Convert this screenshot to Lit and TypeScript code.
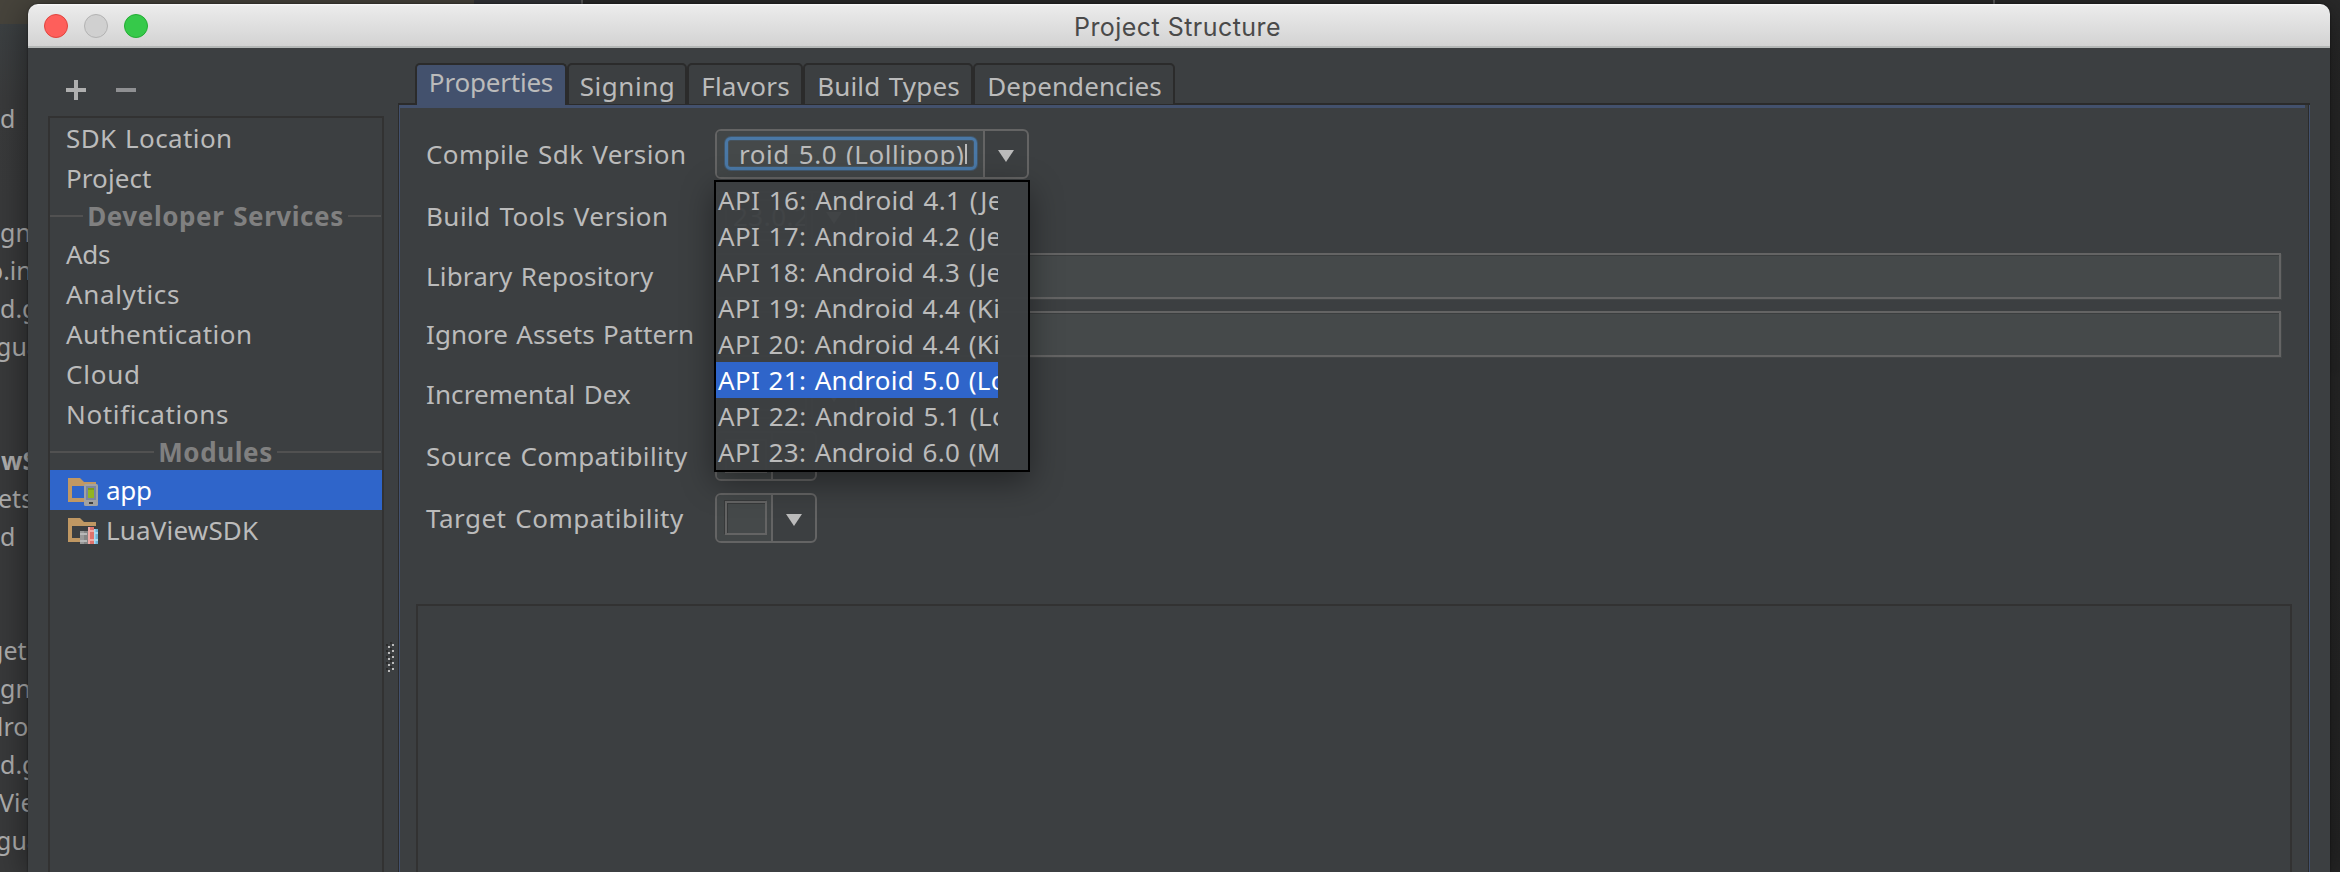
import { LitElement, html, css, svg, nothing } from "lit";
import { customElement, property } from "lit/decorators.js";
import { styleMap } from "lit/directives/style-map.js";

const UI_FONT = '"Noto Sans", sans-serif';
const TITLE_FONT = 'Inter, sans-serif';
const WORD_GAP = 1.5;

const pen = document.createElement("canvas").getContext("2d")!;

/** Letter spacing that makes `text` span `width` pixels from first to last stroke. */
function tracking(text: string, width: number, font: string, wordGap: number): string {
  pen.font = font;
  const m = pen.measureText(text);
  const natural = m.actualBoundingBoxLeft + m.actualBoundingBoxRight;
  const spaces = text.split(" ").length - 1;
  return `${((width - natural - spaces * wordGap) / (text.length - 1)).toFixed(3)}px`;
}

@customElement("ui-text")
class UiText extends LitElement {
  static styles = css`
    :host { display: inline-block; white-space: pre; }
    .run { word-spacing: 1.5px; font-kerning: normal; }
    .title { word-spacing: 0; }
  `;
  @property() text = "";
  @property() tail = "";
  @property() kind: "plain" | "bold" | "title" = "plain";
  @property({ type: Number }) span = 0;

  render() {
    const title = this.kind === "title";
    const font = title ? `25px ${TITLE_FONT}` : `${this.kind === "bold" ? "bold " : ""}26px ${UI_FONT}`;
    const spacing = tracking(this.text, this.span, font, title ? 0 : WORD_GAP);
    return html`<span class="run ${this.kind}" style=${styleMap({ letterSpacing: spacing })}>${this.text}${this.tail}</span>`;
  }
}

const t = (text: string, span: number, kind = "plain", tail = "") =>
  html`<ui-text .text=${text} .span=${span} .kind=${kind} .tail=${tail}></ui-text>`;

@customElement("ui-combo")
class UiCombo extends LitElement {
  static styles = css`
    :host { display: flex; box-sizing: border-box; height: 50px; border: 2px solid #646464; border-radius: 6px;
      background: #3c3f41; position: relative; }
    .editor { flex: 1; display: flex; background: #424647; border-right: 2px solid #646464; border-radius: 4px 0 0 4px; min-width: 0; }
    .box { flex: 1; box-sizing: border-box; height: 34px; margin: 6px 4px 0 8px; border: 2px solid #646464; background: #45494a;
      box-shadow: -1px -1px 0 #37393a, inset 1px 1px 0 #37393a; overflow: hidden; line-height: 30px; padding-left: 6px; }
    .focused { height: 33px; margin-right: 6px; border: 3px solid #4a78a6; border-radius: 6px; padding: 2px 0 0 11px;
      box-shadow: 0 0 0 1px #41586d, inset 0 0 0 1px #46535d; line-height: 24px; }
    .clip { display: flex; height: 23px; overflow: hidden; }
    .caret { width: 1.5px; height: 20px; margin: 2px 0 0 1px; background: #bbb; }
    .arrow { width: 42px; display: flex; align-items: center; justify-content: center; }
    .arrow svg { display: block; margin-top: 4px; }
  `;
  @property({ type: Boolean }) focused = false;
  @property() value = "";
  @property({ type: Number }) span = 0;

  render() {
    const value = this.value ? t(this.value, this.span) : nothing;
    return html`
      <div class="editor">
        ${this.focused
          ? html`<div class="box focused"><div class="clip">${value}<i class="caret"></i></div></div>`
          : html`<div class="box">${value}</div>`}
      </div>
      <div class="arrow"><svg width="16" height="12"><path d="M0 0H16L8 12Z" fill="#bbb" /></svg></div>
      <slot></slot>
    `;
  }
}

const TREE: [string, number, boolean?][] = [
  ["SDK Location", 163],
  ["Project", 83],
  ["Developer Services", 253, true],
  ["Ads", 44],
  ["Analytics", 113],
  ["Authentication", 184],
  ["Cloud", 71],
  ["Notifications", 160],
  ["Modules", 111, true],
];

const TABS: [string, number, number][] = [
  ["Properties", 122, 152],
  ["Signing", 92, 120],
  ["Flavors", 86, 116],
  ["Build Types", 140, 170],
  ["Dependencies", 172, 202],
];

const APIS: [string, number, string][] = [
  ["API 16: Android 4.1", 238, " (Jelly Bean)"],
  ["API 17: Android 4.2", 241, " (Jelly Bean)"],
  ["API 18: Android 4.3", 241, " (Jelly Bean)"],
  ["API 19: Android 4.4", 242, " (KitKat)"],
  ["API 20: Android 4.4", 242, " (KitKat Wear)"],
  ["API 21: Android 5.0", 241, " (Lollipop)"],
  ["API 22: Android 5.1", 238, " (Lollipop)"],
  ["API 23: Android 6.0", 241, " (Marshmallow)"],
];

/** Ends of the project tree rows that stay visible beside the dialog: line, text, offset. */
const BEHIND: [number, string, number][] = [
  [0, "d", 0], [3, "gn", 0], [4, "o.in", -12], [5, "d.g", 0], [6, "gua", -4],
  [9, "wS", 1], [10, "ets", -2], [11, "d", 0],
  [14, "get", -12], [15, "gn", 0], [16, "dro", -12], [17, "d.g", 0], [18, "Vie", -1], [19, "gua", -4],
];

const folder = svg`<path fill="#c09863" d="M0 0H12L16 4H28V8H4V20H16V24H0Z" />`;

const appIcon = html`<svg class="icon" width="30" height="28" viewBox="0 0 30 28">
  ${folder}
  <path fill="#2f65ca" d="M4 8H16V20H4Z" />
  <rect x="16" y="6" width="14" height="22" rx="1.5" fill="#a2a2a2" />
  <rect x="18" y="8" width="10" height="14" fill="#7b86a0" />
  <rect x="20" y="10" width="6" height="10" fill="#92b422" />
  <rect x="20" y="10" width="6" height="2" fill="#7c9c1c" />
  <rect x="21" y="24" width="4" height="2" fill="#3f3f3f" />
</svg>`;

const libIcon = html`<svg class="icon" width="30" height="28" viewBox="0 0 30 28">
  <path fill="#c09863" d="M0 0H12L16 4H28V8H4V20H12V24H0Z" />
  <rect x="12" y="13" width="4" height="13" fill="#9a9a9a" />
  <rect x="16" y="13" width="4" height="13" fill="#858585" />
  <path fill="#b8b8b8" d="M12 15H19V17H12ZM12 22H19V24H12Z" />
  <rect x="20" y="9" width="6" height="17" fill="#e0736c" />
  <path fill="#f0aaa5" d="M20 9H22V26H20ZM20 12H26V14H20ZM20 21H26V23H20Z" />
  <rect x="26" y="11" width="4" height="15" fill="#6fb4d8" />
  <path fill="#a9d9ef" d="M26 14H30V16H26ZM26 21H30V23H26ZM26 11H27.5V26H26Z" />
</svg>`;

@customElement("app-root")
class AppRoot extends LitElement {
  static styles = css`
    :host { display: block; width: 2340px; height: 872px; overflow: hidden; font: 26px "Noto Sans", sans-serif; color: #bbb; }
    .desktop { display: flex; position: relative; height: 872px; background:
      linear-gradient(#47443c, #47443c) 0 0 / 474px 24px no-repeat,
      linear-gradient(#5a5a5a, #5a5a5a) 581px 0 / 2px 4px no-repeat,
      linear-gradient(#5a5a5a, #5a5a5a) 1993px 0 / 2px 4px no-repeat,
      linear-gradient(#333438, #333438) 474px 0 / 107px 4px no-repeat,
      linear-gradient(#2a2a2a, #272727 370px, #292929 378px, #262626) 400px 0 / 1940px 872px no-repeat,
      linear-gradient(#3c4042 24px, #3a3b3c 100px, #393a3b 200px); }
    .behind { width: 28px; height: 760px; margin-top: 100px; flex: none; overflow: hidden; display: grid;
      grid-auto-rows: 38px; font-size: 25px; line-height: 36px; color: #b0b0b0; white-space: pre; }
    .strong { font-weight: bold; }
    .window { width: 2302px; height: 868px; margin-top: 4px; flex: none; display: flex; flex-direction: column; position: relative;
      background: #3c3f41; border-radius: 10px 10px 0 0; box-shadow: 0 0 2px rgba(0,0,0,.6), 0 6px 36px rgba(0,0,0,.5); }
    .titlebar { height: 44px; box-sizing: border-box; flex: none; display: grid; grid-template-columns: 1fr auto 1fr; align-items: center;
      padding: 0 17px 0 16px; border-bottom: 2px solid #b4b7b6; border-radius: 10px 10px 0 0;
      background: linear-gradient(#fafafa 0, #ebebeb 2px, #d3d3d3 100%); }
    .lights { display: flex; gap: 16px; margin-top: 2px; }
    .light { width: 24px; height: 24px; box-sizing: border-box; border-radius: 50%; border: 1.5px solid #e0443e; background: #fe5f5b; }
    .off { border-color: #b3b3b3; background: #d0d0d0; }
    .zoom { border-color: #22ad33; background: #36c94a; }
    .caption { font-family: Inter, sans-serif; font-size: 25px; font-weight: 400; line-height: 38px; margin: 0; padding-top: 3px;
      color: #4a4a4a; transform: translateX(-1px); }
    .body { flex: 1; display: flex; min-height: 0; }
    .side { width: 336px; margin-left: 20px; flex: none; display: flex; flex-direction: column; }
    .tools { height: 68px; box-sizing: border-box; padding: 32px 0 0 18px; display: flex; gap: 30px; }
    .tools svg { display: block; }
    .list { flex: 1; border: 2px solid #323232; border-bottom: 0; }
    .row { height: 40px; line-height: 40px; padding-left: 16px; display: flex; }
    .module { padding-left: 18px; }
    .icon { display: block; margin: 8px 8px 0 0; }
    .selected { background: #2f65ca; color: #fff; }
    .group { height: 36px; line-height: 36px; display: flex; gap: 4px; color: #808080; font-weight: bold; }
    .group::before, .group::after { content: ""; flex: 1; height: 2px; margin-top: 17px; background: #515151; }
    .group::after { margin-right: 1px; }
    .grip { width: 14px; flex: none; padding: 594px 0 0 2px; box-sizing: border-box; }
    .grip svg { display: block; }
    .main { width: 1912px; flex: none; display: flex; flex-direction: column; }
    .tabs { height: 57px; flex: none; box-sizing: border-box; padding: 15px 0 0 17px; display: flex; }
    .tab { box-sizing: border-box; height: 42px; border: 2px solid #2b2b2b; border-bottom-width: 1px; border-radius: 5px 5px 0 0;
      line-height: 43px; text-align: center; padding-left: 1px; }
    .active { background: #43516d; line-height: 35px; border-bottom: 0; padding-left: 0; }
    .tabs::before { content: ""; width: 17px; height: 2px; background: #2b2b2b; align-self: flex-end; margin-left: -17px; }
    .tabs::after { content: ""; flex: 1; height: 2px; background: #2b2b2b; align-self: flex-end; }
    .sheet { flex: 1; display: flex; flex-direction: column; border: solid #43516d; border-width: 0 1px;
      box-shadow: -1px 0 0 #2b2b2b, inset -1px 0 0 #2b2b2b; margin-left: 1px; }
    .bar { height: 3px; flex: none; background: #43516d; margin-right: 4px; }
    .form { padding: 21px 28px 0 26px; display: grid; grid-template-columns: 289px 1fr; row-gap: 12px; align-items: center; }
    .name { line-height: 46px; }
    .field { height: 46px; box-sizing: border-box; border: 2px solid #646464; background: #45494a; box-shadow: inset 0 1px 0 #3b3e3f, 1px 1px 0 #434647; }
    .wide { width: 314px; z-index: 2; }
    .mid { width: 142px; }
    .small { width: 102px; }
    .menu { position: absolute; left: -3px; top: 49px; width: 316px; height: 292px; box-sizing: border-box; border: 2px solid #000;
      background: rgba(60, 63, 65, .965); box-shadow: 0 10px 30px rgba(0,0,0,.4); }
    .option { width: 282px; box-sizing: border-box; height: 36px; line-height: 36px; padding-left: 2px; overflow: hidden; white-space: nowrap; }
    .panel { flex: 1; margin: 61px 17px 0 16px; border: 2px solid #323232; border-bottom: 0; }
  `;

  private menu() {
    return html`<div class="menu">
      ${APIS.map(([name, span, tail], i) => html`<div class="option ${i === 5 ? "selected" : ""}">${t(name, span, "plain", tail)}</div>`)}
    </div>`;
  }

  private grip() {
    return html`<svg width="8" height="32">
      ${[0, 1, 2, 3, 4].map((i) => svg`
        <path fill="#2b2b2b" d="M4 ${i * 6}h2v2h-2zM0 ${i * 6 + 2}h2v2h-2z" />
        <path fill="#bbb" d="M6 ${i * 6 + 2}h2v2h-2zM2 ${i * 6 + 4}h2v2h-2z" />`)}
    </svg>`;
  }

  render() {
    const field = (name: string, span: number, control: unknown) => html`<div class="name">${t(name, span)}</div>${control}`;
    return html`<div class="desktop">
      <div class="behind">
        ${BEHIND.map(([line, text, x]) => html`<span class=${text === "wS" ? "strong" : ""}
          style=${styleMap({ gridRow: String(line + 1), gridColumn: "1", marginLeft: `${x}px` })}>${text}</span>`)}
      </div>
      <div class="window">
        <div class="titlebar">
          <div class="lights"><i class="light"></i><i class="light off"></i><i class="light zoom"></i></div>
          <h1 class="caption">${t("Project Structure", 204, "title")}</h1>
        </div>
        <div class="body">
          <div class="side">
            <div class="tools">
              <svg width="20" height="20"><path fill="#afafaf" d="M8 0H12V8H20V12H12V20H8V12H0V8H8Z" /></svg>
              <svg width="20" height="20"><path fill="#8f9092" d="M0 8H20V12H0Z" /></svg>
            </div>
            <div class="list">
              ${TREE.map(([name, span, group]) => html`<div class=${group ? "group" : "row"}>${t(name, span, group ? "bold" : "plain")}</div>`)}
              <div class="row module selected">${appIcon}${t("app", 44)}</div>
              <div class="row module">${libIcon}${t("LuaViewSDK", 151)}</div>
            </div>
          </div>
          <div class="grip">${this.grip()}</div>
          <div class="main">
            <div class="tabs">
              ${TABS.map(([name, span, width], i) => html`<div class="tab ${i === 0 ? "active" : ""}"
                style=${styleMap({ width: `${width}px` })}>${t(name, span)}</div>`)}
            </div>
            <div class="sheet">
              <div class="bar"></div>
              <div class="form">
                ${field("Compile Sdk Version", 257, html`<ui-combo class="wide" focused value="roid 5.0 (Lollipop)" .span=${222}>${this.menu()}</ui-combo>`)}
                ${field("Build Tools Version", 238, html`<ui-combo class="mid" value="23.0.2" .span=${74}></ui-combo>`)}
                ${field("Library Repository", 226, html`<div class="field"></div>`)}
                ${field("Ignore Assets Pattern", 265, html`<div class="field"></div>`)}
                ${field("Incremental Dex", 204, html`<ui-combo class="mid"></ui-combo>`)}
                ${field("Source Compatibility", 261, html`<ui-combo class="small"></ui-combo>`)}
                ${field("Target Compatibility", 258, html`<ui-combo class="small"></ui-combo>`)}
              </div>
              <div class="panel"></div>
            </div>
          </div>
        </div>
      </div>
    </div>`;
  }
}
